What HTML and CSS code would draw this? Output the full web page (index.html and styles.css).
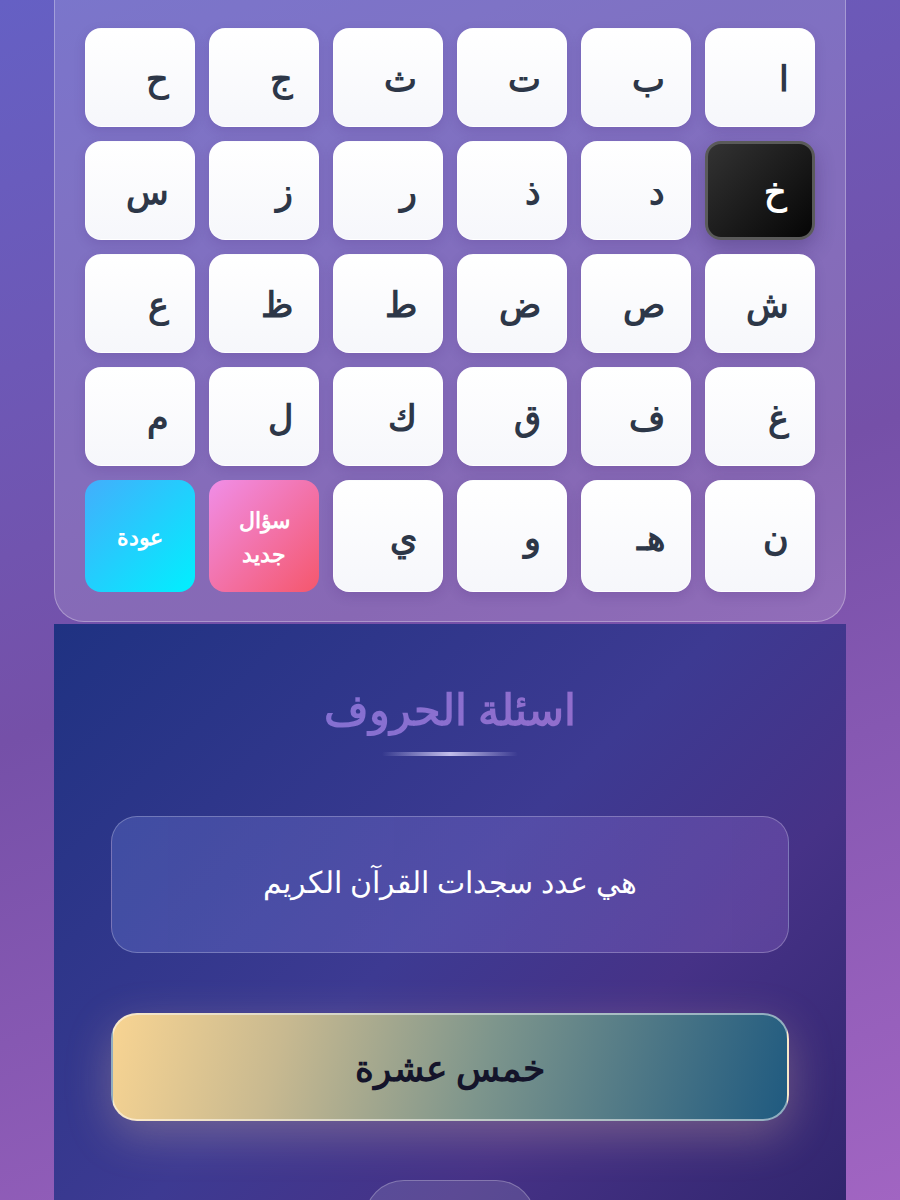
FILE: index.html
```html
<!DOCTYPE html>
<html lang="ar" dir="rtl">
<head>
    <meta charset="UTF-8">
    <meta name="viewport" content="width=device-width, initial-scale=1.0">
    <title>اسئلة الحروف</title>
    <link rel="stylesheet" href="styles.css">
</head>
<body>
    <div class="container">
        <div class="board">
            <button class="letter">ا</button>
            <button class="letter">ب</button>
            <button class="letter">ت</button>
            <button class="letter">ث</button>
            <button class="letter">ج</button>
            <button class="letter">ح</button>

            <button class="letter active">خ</button>
            <button class="letter">د</button>
            <button class="letter">ذ</button>
            <button class="letter">ر</button>
            <button class="letter">ز</button>
            <button class="letter">س</button>

            <button class="letter">ش</button>
            <button class="letter">ص</button>
            <button class="letter">ض</button>
            <button class="letter">ط</button>
            <button class="letter">ظ</button>
            <button class="letter">ع</button>

            <button class="letter">غ</button>
            <button class="letter">ف</button>
            <button class="letter">ق</button>
            <button class="letter">ك</button>
            <button class="letter">ل</button>
            <button class="letter">م</button>

            <button class="letter">ن</button>
            <button class="letter">هـ</button>
            <button class="letter">و</button>
            <button class="letter">ي</button>
            <button class="action new-q"><span>سؤال</span><span>جديد</span></button>
            <button class="action back">عودة</button>
        </div>

        <div class="quiz">
            <h1 class="title">اسئلة الحروف</h1>
            <div class="title-line"></div>

            <div class="question">هي عدد سجدات القرآن الكريم</div>

            <button class="answer">خمس عشرة</button>

            <div class="next-wrap">
                <button class="next"></button>
            </div>
        </div>
    </div>
</body>
</html>
```

FILE: styles.css
```css
* {
    box-sizing: border-box;
}
body {
    margin: 0;
    min-height: 100vh;
    font-family: "Noto Sans", sans-serif;
    background: linear-gradient(160deg, #6560c4 0%, #7550a8 45%, #a868c6 100%);
    overflow: hidden;
}
.container {
    width: 792px;
    margin: 0 auto;
}
.board {
    display: grid;
    grid-template-columns: repeat(6, 1fr);
    gap: 14px;
    padding: 28px 30px 29px;
    background: rgba(255, 255, 255, 0.14);
    border: 1px solid rgba(255, 255, 255, 0.3);
    border-top: none;
    border-radius: 0 0 30px 30px;
}
.letter, .action {
    min-height: 99px;
    border-radius: 16px;
    border: 1px solid rgba(255, 255, 255, 0.6);
    font-family: inherit;
    cursor: pointer;
}
.letter {
    background: linear-gradient(180deg, #ffffff, #f6f7fb);
    color: #2d3748;
    font-size: 35px;
    font-weight: 700;
    text-align: right;
    padding: 0 25px;
    box-shadow: 0 4px 12px rgba(60, 30, 110, 0.15);
}
.letter.active {
    background: linear-gradient(135deg, #333333, #050505);
    color: #fff;
    border: 3px solid #5a5a5a;
    box-shadow: 0 8px 20px rgba(40, 20, 80, 0.3);
}
.action {
    display: flex;
    flex-direction: column;
    align-items: center;
    justify-content: center;
    gap: 4px;
    color: #fff;
    font-size: 22px;
    font-weight: 700;
    line-height: 30px;
    padding: 24px 10px;
    border: none;
}
.new-q {
    background: linear-gradient(135deg, #f08ee8, #f5576c);
}
.back {
    background: linear-gradient(135deg, #43aefc, #00f0fe);
}

.quiz {
    height: 700px;
    margin-top: 2px;
    padding: 58px 57px 0;
    background: linear-gradient(135deg, #1f3282 0%, #3d3a92 45%, #463287 65%, #2b2266 100%);
    text-align: center;
}
.title {
    margin: 0;
    font-size: 43px;
    font-weight: 700;
    line-height: 54px;
    background: linear-gradient(90deg, #7a72d6, #9c6cc8);
    -webkit-background-clip: text;
    background-clip: text;
    color: transparent;
}
.title-line {
    width: 136px;
    height: 4px;
    margin: 16px auto 0;
    border-radius: 2px;
    background: linear-gradient(90deg, rgba(255,255,255,0), rgba(210, 205, 245, 0.9), rgba(255,255,255,0));
}
.question {
    margin-top: 60px;
    height: 137px;
    display: flex;
    align-items: center;
    justify-content: center;
    border-radius: 26px;
    border: 1px solid rgba(255, 255, 255, 0.25);
    background: linear-gradient(90deg, rgba(120, 140, 230, 0.28), rgba(150, 110, 210, 0.3));
    color: #fff;
    font-size: 30px;
    font-weight: 500;
    padding-bottom: 6px;
}
.answer {
    display: block;
    width: 100%;
    height: 108px;
    margin-top: 60px;
    border-radius: 26px;
    border: 2px solid rgba(255, 255, 255, 0.5);
    background: linear-gradient(105deg, #f8d492 0%, #c8b990 25%, #7d958c 55%, #1f5a80 100%);
    color: #14142a;
    font-family: inherit;
    font-size: 36px;
    font-weight: 700;
    box-shadow: 0 14px 45px rgba(250, 210, 160, 0.28);
}
.next-wrap {
    margin-top: 59px;
    display: flex;
    justify-content: center;
}
.next {
    width: 172px;
    height: 80px;
    border-radius: 40px;
    border: 1px solid rgba(255, 255, 255, 0.25);
    background: rgba(255, 255, 255, 0.12);
}
```
